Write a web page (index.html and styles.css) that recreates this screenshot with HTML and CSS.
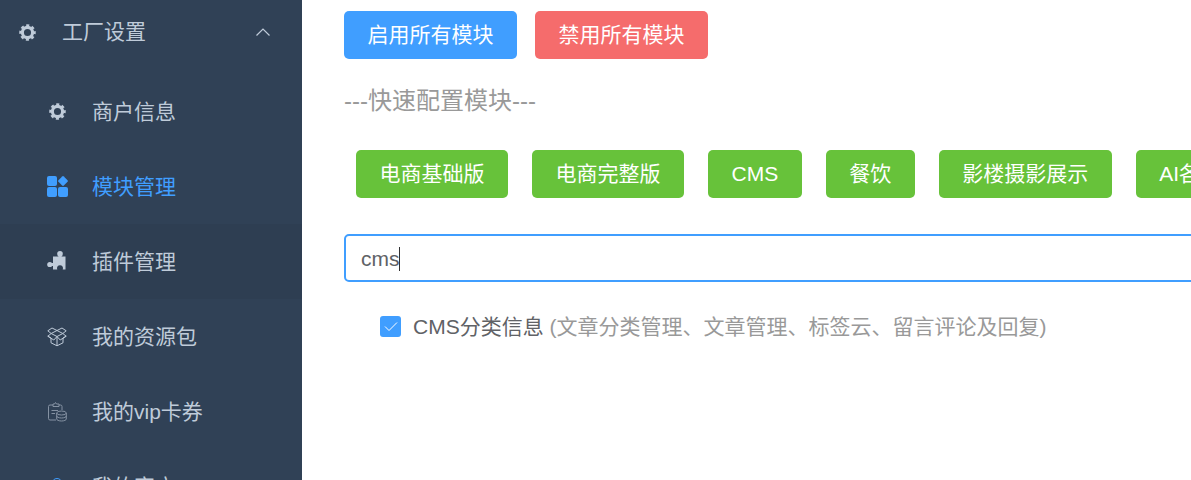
FILE: index.html
```html
<!DOCTYPE html>
<html lang="zh-CN">
<head>
  <meta charset="UTF-8" />
  <title>模块管理</title>
  <link rel="stylesheet" href="styles.css">
</head>
<body>
  <aside class="sidebar">
    <div class="menu-title">
      <svg class="icon gear" viewBox="0 0 20 20">
        <circle class="gear-ring" cx="10" cy="10" r="6"/>
        <circle class="gear-teeth" cx="10" cy="10" r="8.300"/>
      </svg>
      <span>工厂设置</span>
      <svg class="arrow" viewBox="0 0 16 10"><path d="M1.500 8.500 8 2l6.500 6.500"/></svg>
    </div>
    <ul class="submenu">
      <li>
        <svg class="icon gear" viewBox="0 0 20 20">
          <circle class="gear-ring" cx="10" cy="10" r="6"/>
          <circle class="gear-teeth" cx="10" cy="10" r="8.300"/>
        </svg>
        <span>商户信息</span>
      </li>
      <li class="active">
        <svg class="icon wide" viewBox="0 0 21 21">
          <rect x="0" y="0" width="10" height="10" rx="2"/>
          <rect x="0" y="11" width="10" height="10" rx="2"/>
          <rect x="11" y="11" width="10" height="10" rx="2"/>
          <rect x="12.200" y="1.200" width="7.600" height="7.600" rx="1.200" transform="rotate(45 16 5)"/>
        </svg>
        <span>模块管理</span>
      </li>
      <li class="hover">
        <svg class="icon wide" viewBox="0 0 21 21">
          <path d="M6 5.500H18.500V18.500H15.700A3 3 0 1 0 10.300 18.500H6Z"/>
          <circle cx="13" cy="2.800" r="2.800"/>
          <rect x="11.500" y="3" width="3" height="3"/>
          <circle cx="2.800" cy="13.500" r="2.600"/>
          <rect x="4" y="12" width="3" height="3"/>
        </svg>
        <span>插件管理</span>
      </li>
      <li>
        <svg class="icon line" viewBox="0 0 20 20">
          <path d="M10 3.500 5 1 .8 3.800 4.200 6.500 .8 9.200 4 11v4.800l6 3 6-3V11l3.200-1.800-3.400-2.700 3.400-2.700L15 1zM4.200 6.500 10 3.500l5.800 3L10 9.500zM10 9.500 6.800 13 .8 9.200M10 9.500l3.200 3.500 6-3.800M10 9.500v9.300"/>
        </svg>
        <span>我的资源包</span>
      </li>
      <li>
        <svg class="icon line dim" viewBox="0 0 20 20">
          <path d="M6 3H3a1.500 1.500 0 0 0-1.500 1.500v12A1.500 1.500 0 0 0 3 18h6M12 3h1.500A1.500 1.500 0 0 1 15 4.500V8M6 4.500V2h1.500l1-1.500 1 1.500H12v2.500zM4.500 8.500H11M4.500 11.500H8"/>
          <ellipse cx="14.500" cy="11" rx="4.800" ry="2"/>
          <path d="M9.700 11v6c0 1.100 2.100 2 4.800 2s4.800-.9 4.800-2v-6M9.700 14c0 1.100 2.100 2 4.800 2s4.800-.9 4.800-2"/>
        </svg>
        <span>我的vip卡券</span>
      </li>
      <li>
        <svg class="icon line blue" viewBox="0 0 20 20">
          <circle cx="10" cy="6.500" r="5"/>
          <path d="M2 19c.5-4.500 4-7 8-7s7.500 2.500 8 7"/>
        </svg>
        <span>我的客户</span>
      </li>
    </ul>
  </aside>

  <main class="content">
    <div class="actions">
      <button class="btn btn-primary">启用所有模块</button>
      <button class="btn btn-danger">禁用所有模块</button>
    </div>
    <p class="quick-title">---快速配置模块---</p>
    <div class="presets">
      <button class="btn btn-success">电商基础版</button>
      <button class="btn btn-success">电商完整版</button>
      <button class="btn btn-success">CMS</button>
      <button class="btn btn-success">餐饮</button>
      <button class="btn btn-success">影楼摄影展示</button>
      <button class="btn btn-success">AI各类</button>
    </div>
    <div class="search">cms<i class="caret"></i></div>
    <label class="module">
      <span class="checkbox">
        <svg viewBox="0 0 14 11"><path d="M1 5.500 5 9.500 13 1.500"/></svg>
      </span>
      <span class="module-name">CMS分类信息 <em>(文章分类管理、文章管理、标签云、留言评论及回复)</em></span>
    </label>
  </main>
</body>
</html>
```

FILE: styles.css
```css
* {
  margin: 0;
  padding: 0;
  box-sizing: border-box;
}

html, body {
  height: 100%;
  overflow: hidden;
}

body {
  display: flex;
  background: #ffffff;
  font-family: "Liberation Sans", "Noto Sans CJK SC", sans-serif;
  font-size: 21px;
  line-height: 24px;
  color: #606266;
}

.sidebar {
  flex: 0 0 302px;
  height: 100%;
  overflow: hidden;
  background: #304156;
  color: #bfcbd9;
}

.menu-title {
  height: 64px;
  display: flex;
  align-items: center;
  padding-left: 19px;
}

.menu-title span {
  margin-left: 26px;
}

.arrow {
  width: 16px;
  height: 10px;
  margin-left: auto;
  margin-right: 31px;
  fill: none;
  stroke: #bfcbd9;
  stroke-width: 1.200;
}

.submenu {
  list-style: none;
  padding-top: 10px;
}

.submenu li {
  height: 75px;
  display: flex;
  align-items: center;
  padding-left: 47px;
}

.submenu li span {
  margin-left: 24px;
}

.submenu li.active {
  color: #409eff;
}

.submenu li.hover {
  background: #2e3e52;
}

.icon {
  flex: none;
  width: 17px;
  height: 17px;
  fill: #bfcbd9;
}

.gear circle {
  fill: none;
  stroke: #bfcbd9;
}

.gear-ring {
  stroke-width: 3.600;
}

.gear-teeth {
  stroke-width: 2.800;
  stroke-dasharray: 3.600 2.920;
  stroke-dashoffset: 1.800;
}

.submenu li .icon {
  margin: 0 2px;
}

.submenu li .icon.wide {
  width: 21px;
  height: 21px;
  margin: 0;
}

.submenu li.active .icon {
  fill: #409eff;
}

.icon.line {
  fill: none;
  stroke: #bfcbd9;
  stroke-width: 1;
}

.submenu li .icon.line {
  width: 20px;
  height: 20px;
  margin: 0 1px 0 0;
}

.icon.dim {
  stroke: #8592a3;
}

.icon.blue {
  stroke: #409eff;
}

.content {
  flex: 1;
  min-width: 0;
  overflow: hidden;
  padding: 11px 0 0 42px;
}

.actions {
  display: flex;
  gap: 18px;
}

.btn {
  flex: none;
  height: 48px;
  padding: 0 23.500px;
  border: 0;
  border-radius: 5px;
  color: #ffffff;
  font: inherit;
}

.btn-primary { background: #409eff; }
.btn-danger { background: #f56c6c; }
.btn-success { background: #67c23a; }

.quick-title {
  margin-top: 24px;
  height: 36px;
  line-height: 36px;
  font-size: 24px;
  color: #999999;
}

.presets {
  display: flex;
  gap: 24px;
  width: 1000px;
  margin-top: 31px;
  padding-left: 12px;
}

.search {
  display: flex;
  align-items: center;
  width: 1000px;
  height: 48px;
  margin-top: 36px;
  padding: 2px 0 0 15px;
  border: 2px solid #409eff;
  border-radius: 5px;
}

.caret {
  width: 1px;
  height: 24px;
  margin-left: -1px;
  background: #303133;
}

.module {
  display: flex;
  align-items: center;
  margin-top: 33px;
  padding-left: 36px;
}

.checkbox {
  display: flex;
  align-items: center;
  justify-content: center;
  width: 21px;
  height: 21px;
  margin-right: 12px;
  margin-bottom: 2px;
  border-radius: 3px;
  background: #409eff;
}

.checkbox svg {
  width: 14px;
  height: 11px;
  fill: none;
  stroke: #ffffff;
  stroke-width: 1;
}

.module-name {
  white-space: nowrap;
}

.module-name em {
  font-style: normal;
  color: #999999;
}
```
